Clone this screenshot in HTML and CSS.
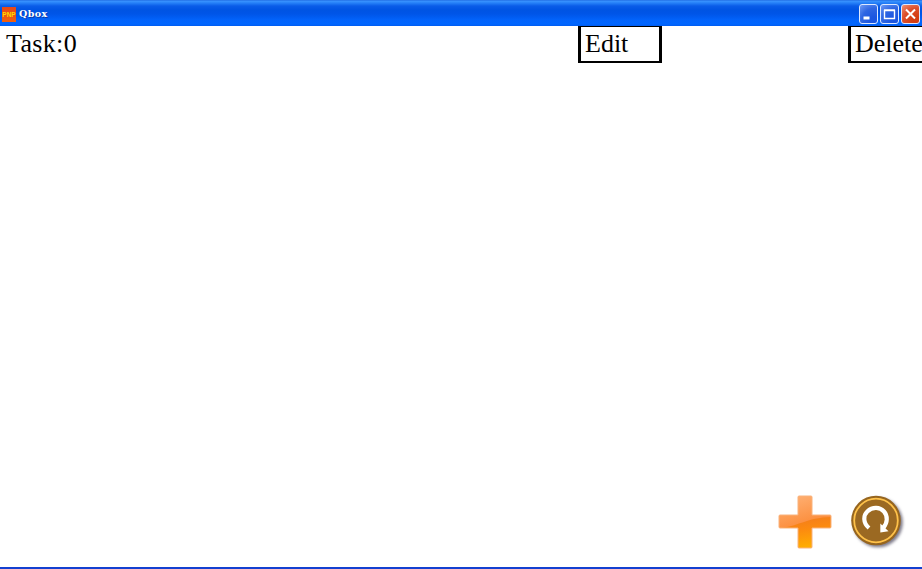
FILE: index.html
```html
<!DOCTYPE html>
<html lang="en">
<head>
<meta charset="utf-8">
<title>Qbox</title>
<link rel="stylesheet" href="styles.css">
</head>
<body>
<div class="window">
  <header class="titlebar">
    <span class="app-icon">PNP</span>
    <span class="title">Qbox</span>
    <div class="controls">
      <button class="control" aria-label="Minimize"><svg viewBox="0 0 17 18"><path d="M3.5 13h6" stroke="#fff" stroke-width="3"/></svg></button>
      <button class="control" aria-label="Maximize"><svg viewBox="0 0 17 18"><path d="M3.5 5.5h10v8h-10zM3 5h11" fill="none" stroke="#fff" stroke-width="1.4"/></svg></button>
      <button class="control close" aria-label="Close"><svg viewBox="0 0 17 18"><path d="M4 4.5l9 9M13 4.5l-9 9" fill="none" stroke="#fff" stroke-width="2"/></svg></button>
    </div>
  </header>
  <main class="content">
    <div class="toolbar">
      <span class="count">Task:0</span>
      <button class="tool edit">Edit</button>
      <button class="tool delete">Delete</button>
    </div>
    <div class="actions">
      <button class="action" aria-label="Add">
        <svg width="56" height="58" viewBox="0 0 56 58">
          <defs>
            <linearGradient id="plus" x1="0" y1="0" x2=".3" y2="1"><stop offset="0" stop-color="#ffb880"/><stop offset=".6" stop-color="#fc9040"/></linearGradient>
            <linearGradient id="glow" x1="0" y1="0" x2=".25" y2="1"><stop offset="0" stop-color="#f07820"/><stop offset=".45" stop-color="#fc8a10"/><stop offset="1" stop-color="#ffb000"/></linearGradient>
            <clipPath id="plus-clip"><path d="M22 3h12q1 0 1 1v18h18q1 0 1 1v11q0 1-1 1H35v19q0 1-1 1H22q-1 0-1-1V35H3q-1 0-1-1V23q0-1 1-1h18V4q0-1 1-1z"/></clipPath>
          </defs>
          <g clip-path="url(#plus-clip)">
            <path d="M0 0h56v58H0z" fill="url(#plus)"/>
            <path d="M0 35C20 35 29 24 56 24V58H0z" fill="url(#glow)"/>
          </g>
          <path d="M22 3h12q1 0 1 1v18h18q1 0 1 1v11q0 1-1 1H35v19q0 1-1 1H22q-1 0-1-1V35H3q-1 0-1-1V23q0-1 1-1h18V4q0-1 1-1z" fill="none" stroke="#f9b27c" stroke-width="1"/>
        </svg>
      </button>
      <button class="action" aria-label="Refresh">
        <svg class="refresh" width="56" height="58" viewBox="0 0 56 58">
          <circle cx="27" cy="27.5" r="24.8" fill="#96651f"/>
          <circle cx="27" cy="27.5" r="21.8" fill="#9b6922" stroke="#ffc24a" stroke-width="1.8"/>
          <path d="M20 35C13.5 29.5 14.5 22 18.3 18.5C23.5 13.5 31 14 35 18.5C39 23 38.5 30 34.5 34.5" fill="none" stroke="#fff" stroke-width="4.2"/>
          <path d="M31.3 30.5v9l8.2-1.3z" fill="#fff"/>
        </svg>
      </button>
    </div>
  </main>
</div>
</body>
</html>
```
FILE: styles.css
```css
* { box-sizing: border-box; }
body { margin: 0; overflow: hidden; }
button { padding: 0; margin: 0; background: none; border: 0; }
.window {
  width: 922px;
  height: 569px;
  display: flex;
  flex-direction: column;
  background: #fff;
  border-bottom: 2px solid #1440d0;
}
.titlebar {
  height: 26px;
  flex: none;
  display: flex;
  align-items: center;
  padding: 2px 2px 0;
  background: linear-gradient(#1a62dc 0, #3a94ff 1px, #2580f8 3px, #0a5ce8 6px, #0054e3 10px, #0055e8 14px, #0263fb 20px, #0066ff 24px, #005cf0 26px);
}
.app-icon {
  width: 14px;
  height: 15px;
  overflow: hidden;
  background: linear-gradient(#e84818, #f06010);
  color: #ffdc00;
  font: bold 6.5px/15px "Liberation Sans", sans-serif;
  text-align: center;
}
.title {
  margin-left: 3px;
  color: #fff;
  font: bold 9.5px/12px "DejaVu Serif", serif;
  letter-spacing: .4px;
  text-shadow: 1px 1px 0 #0a3aa8;
}
.controls { display: flex; gap: 2px; margin-left: auto; }
.control {
  width: 19px;
  height: 20px;
  overflow: hidden;
  border: 1px solid #dce8ff;
  border-radius: 3px;
  background: radial-gradient(circle at 85% 90%, #1c56e0 20%, #2f66e2 60%, #6f9bf5);
}
.control svg { display: block; width: 17px; height: 18px; }
.close { background: radial-gradient(circle at 85% 90%, #d43d12 20%, #dc4e2b 60%, #f09478); }
.content { flex: 1; display: flex; flex-direction: column; overflow: hidden; }
.toolbar {
  height: 38px;
  flex: none;
  display: flex;
  padding-left: 6px;
  font: 26px/36px "Liberation Serif", serif;
  color: #000;
}
.count { width: 572px; flex: none; letter-spacing: .35px; }
.tool {
  width: 84px;
  height: 37px;
  flex: none;
  padding-left: 4px;
  border: solid #000;
  border-width: 1px 3px 2px;
  font: inherit;
  line-height: 34px;
  color: inherit;
  text-align: left;
}
.delete { width: 90px; margin-left: 186px; }
.actions {
  margin-top: auto;
  display: flex;
  justify-content: flex-end;
  gap: 16px;
  padding: 0 17px 16px 0;
}
.action { width: 56px; height: 58px; }
.action svg { display: block; }
.refresh { filter: drop-shadow(2px 2px 1.5px rgba(40, 35, 60, .6)); }
```
